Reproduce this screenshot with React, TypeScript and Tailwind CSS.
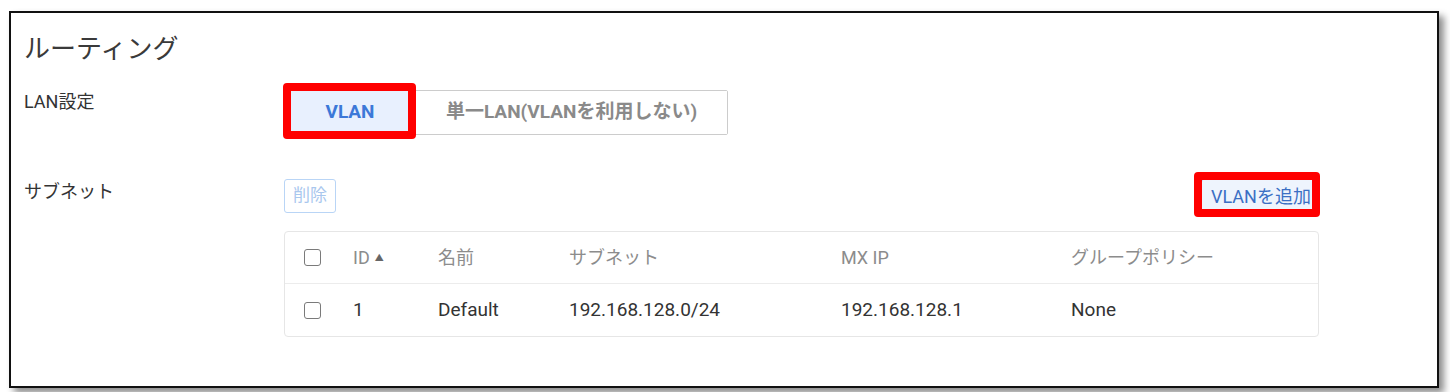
import React from "react";

const font = "font-['Roboto','Noto_Sans_CJK_JP',sans-serif]";

const columns = [
  { key: "id", label: "ID" },
  { key: "name", label: "名前" },
  { key: "subnet", label: "サブネット" },
  { key: "mxip", label: "MX IP" },
  { key: "policy", label: "グループポリシー" },
];

const rows = [
  { id: "1", name: "Default", subnet: "192.168.128.0/24", mxip: "192.168.128.1", policy: "None" },
];

function Checkbox() {
  return <span className="ml-[19px] block h-[17px] w-[17px] rounded-[3px] border-[1.5px] border-[#7a7a7a] bg-white" />;
}

function Highlight({ className }: { className: string }) {
  // red annotation frame drawn over the control
  return <span className={`pointer-events-none absolute rounded-[4px] border-[8px] border-[#ff0000] ${className}`} />;
}

export default function App() {
  return (
    <div className={`min-h-screen bg-white pl-[9px] pt-[11px] ${font}`}>
      <div className="h-[377px] w-[1430px] border-2 border-[#111] bg-white pl-[13px] pt-[18px] shadow-[5px_5px_7px_rgba(0,0,0,0.45)]">
        <h1 className="h-[36px] text-[26px] font-normal leading-[36px] text-[#3a3a3a]">ルーティング</h1>

        {/* LAN settings */}
        <div className="mt-[23px] flex">
          <div className="w-[260px] text-[18px] leading-[24px] text-[#333]">LAN設定</div>
          <div className="flex h-[45px] rounded-[2px] border border-[#cccccc]">
            <div className="relative flex w-[130px] items-center justify-center bg-[#e8f0fe] text-[19px] font-bold text-[#3c78d8]">
              VLAN
              <Highlight className="-top-[8px] -bottom-[5px] -left-[2px] -right-[1px]" />
            </div>
            <div className="flex w-[312px] items-center justify-center border-l border-[#cccccc] bg-white text-[19px] font-bold text-[#8a8a8a]">
              単一LAN(VLANを利用しない)
            </div>
          </div>
        </div>

        {/* Subnets */}
        <div className="mt-[44px] flex">
          <div className="w-[260px] text-[18px] leading-[26px] text-[#333]">サブネット</div>
          <div className="w-[1035px]">
            <div className="flex items-start justify-between">
              <button className="h-[34px] w-[52px] rounded-[3px] border border-[#b9d5f6] bg-white text-[17px] text-[#a9c7ee]">
                削除
              </button>
              <div className="relative">
                <button className="h-[34px] w-[119px] overflow-hidden whitespace-nowrap rounded-[3px] border-l-2 border-[#3b78d8] bg-[#eef4fd] pl-[9px] text-left text-[18px] text-[#3b6fc4]">
                  VLANを追加
                </button>
                <Highlight className="-top-[7px] -bottom-[4px] -left-[6px] -right-[1px]" />
              </div>
            </div>

            <div className="mt-[18px] rounded-[4px] border border-[#e6e6e6]">
              <div className="grid h-[52px] grid-cols-[68px_85px_131px_272px_230px_1fr] items-center border-b border-[#ececec] text-[18px] text-[#8c8c8c]">
                <Checkbox />
                {columns.map((c) => (
                  <div key={c.key} className="flex items-center">
                    {c.label}
                    {c.key === "id" && <span className="ml-[5px] mt-[3px] text-[9px] text-[#666]">▲</span>}
                  </div>
                ))}
              </div>
              {rows.map((r) => (
                <div
                  key={r.id}
                  className="grid h-[52px] grid-cols-[68px_85px_131px_272px_230px_1fr] items-center text-[19px] text-[#333]"
                >
                  <Checkbox />
                  <div>{r.id}</div>
                  <div>{r.name}</div>
                  <div>{r.subnet}</div>
                  <div>{r.mxip}</div>
                  <div>{r.policy}</div>
                </div>
              ))}
            </div>
          </div>
        </div>
      </div>
    </div>
  );
}
